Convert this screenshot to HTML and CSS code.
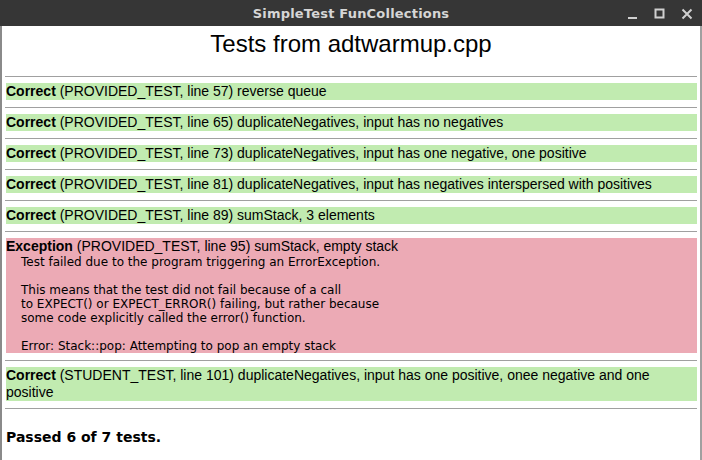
FILE: index.html
```html
<!DOCTYPE html>
<html>
<head>
<meta charset="utf-8">
<link rel="stylesheet" href="styles.css">
</head>
<body>
<div class="window">
  <div class="titlebar">
    <div></div>
    <div class="title">SimpleTest FunCollections</div>
    <div class="controls">
      <svg width="12" height="12" viewBox="0 0 12 12"><rect x="1" y="9" width="9" height="2" fill="#d0d0d0"/></svg>
      <svg width="12" height="12" viewBox="0 0 12 12"><rect x="1.5" y="1.5" width="8" height="8" fill="none" stroke="#d0d0d0" stroke-width="2"/></svg>
      <svg width="12" height="12" viewBox="0 0 12 12"><path d="M1.5 1.5 L10.5 10.5 M10.5 1.5 L1.5 10.5" stroke="#d0d0d0" stroke-width="2"/></svg>
    </div>
  </div>
  <div class="content">
    <h1 class="heading">Tests from adtwarmup.cpp</h1>
    <hr class="rule">
    <div class="result pass"><b>Correct</b> (PROVIDED_TEST, line 57) reverse queue</div>
    <hr class="rule">
    <div class="result pass"><b>Correct</b> (PROVIDED_TEST, line 65) duplicateNegatives, input has no negatives</div>
    <hr class="rule">
    <div class="result pass"><b>Correct</b> (PROVIDED_TEST, line 73) duplicateNegatives, input has one negative, one positive</div>
    <hr class="rule">
    <div class="result pass"><b>Correct</b> (PROVIDED_TEST, line 81) duplicateNegatives, input has negatives interspersed with positives</div>
    <hr class="rule">
    <div class="result pass"><b>Correct</b> (PROVIDED_TEST, line 89) sumStack, 3 elements</div>
    <hr class="rule">
    <div class="result fail"><b>Exception</b> (PROVIDED_TEST, line 95) sumStack, empty stack
<div class="details">Test failed due to the program triggering an ErrorException.

This means that the test did not fail because of a call
to EXPECT() or EXPECT_ERROR() failing, but rather because
some code explicitly called the error() function.

Error: Stack::pop: Attempting to pop an empty stack</div></div>
    <hr class="rule">
    <div class="result pass"><b>Correct</b> (STUDENT_TEST, line 101) duplicateNegatives, input has one positive, onee negative and one positive</div>
    <hr class="rule">
    <div class="summary">Passed 6 of 7 tests.</div>
  </div>
</div>
</body>
</html>
```

FILE: styles.css
```css
html, body {
  margin: 0;
  padding: 0;
}
body {
  width: 702px;
  height: 460px;
  overflow: hidden;
  background: #ffffff;
}
.window {
  display: flex;
  flex-direction: column;
  height: 460px;
}
.titlebar {
  height: 26px;
  background: #363636;
  display: grid;
  grid-template-columns: 1fr auto 1fr;
  align-items: center;
}
.title {
  font-family: "DejaVu Sans", sans-serif;
  font-weight: bold;
  font-size: 13px;
  color: #d6d6d6;
  letter-spacing: 0.2px;
}
.controls {
  display: flex;
  justify-content: flex-end;
  gap: 15px;
  padding-right: 9px;
  padding-top: 1px;
}
.controls svg {
  display: block;
}
.content {
  flex: 1;
  border-left: 2px solid #8a8a8a;
  border-right: 2px solid #a0a0a0;
  padding: 0 3px;
  font-family: "Liberation Sans", Arial, sans-serif;
  font-size: 14px;
  color: #000;
}
.heading {
  margin: 4px 0 18px;
  font-weight: normal;
  font-size: 24px;
  line-height: 28px;
  text-align: center;
}
.rule {
  margin: 0;
  border: 0;
  border-top: 1px solid #a0a0a0;
  height: 0;
}
.result {
  margin: 6px 0 7px 1px;
  line-height: 17px;
}
.pass {
  background: #c1ebb0;
}
.fail {
  background: #ecaab5;
}
.details {
  font-family: "DejaVu Sans", sans-serif;
  font-size: 12px;
  line-height: 14px;
  padding-left: 15px;
  white-space: pre;
}
.summary {
  margin-top: 20px;
  margin-left: 1px;
  font-family: "DejaVu Sans", sans-serif;
  font-weight: bold;
  font-size: 14px;
}
```
